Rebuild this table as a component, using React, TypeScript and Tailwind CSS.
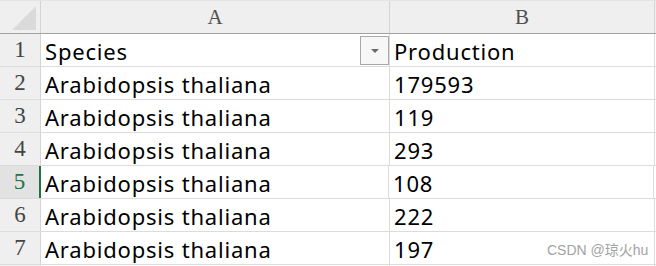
import React from "react"

// Small spreadsheet view: two columns, seven rows, row 5 active
const rows: [string, string][] = [
  ["Species", "Production"],
  ["Arabidopsis thaliana", "179593"],
  ["Arabidopsis thaliana", "119"],
  ["Arabidopsis thaliana", "293"],
  ["Arabidopsis thaliana", "108"],
  ["Arabidopsis thaliana", "222"],
  ["Arabidopsis thaliana", "197"],
]

const ACTIVE_ROW = 5

function FilterButton() {
  return (
    <div className="absolute right-0 top-[2px] w-[29px] h-[29px] border border-[#a8a8a8] bg-[#f7f7f7] flex items-center justify-center">
      <svg width="10" height="6" viewBox="0 0 10 6">
        <path d="M1 1 L9 1 L5 5 Z" fill="#6b6b6b" />
      </svg>
    </div>
  )
}

export default function App() {
  return (
    <div className="relative w-[656px] h-[266px] overflow-hidden bg-white select-none">
      {/* column header strip */}
      <div className="flex h-[34px] bg-[#efefef] border-b border-[#a3a3a3] border-t border-t-[#e4e4e4]">
        <div className="w-[41px] shrink-0 border-r border-[#d4d4d4] relative">
          <svg className="absolute left-[12px] top-[5px]" width="25" height="25" viewBox="0 0 25 25">
            <path d="M0 24 L24 0 L24 24 Z" fill="#dadada" />
          </svg>
        </div>
        <div className="w-[349px] shrink-0 border-r border-[#d4d4d4] flex items-center justify-center pt-[1px] font-['Liberation_Serif',serif] text-[21px] text-[#505050]">
          A
        </div>
        <div className="w-[265px] shrink-0 border-r border-[#d4d4d4] flex items-center justify-center pt-[1px] font-['Liberation_Serif',serif] text-[21px] text-[#505050]">
          B
        </div>
      </div>

      {rows.map(([a, b], i) => {
        const n = i + 1
        const active = n === ACTIVE_ROW
        return (
          <div key={n} className="flex h-[33px] border-b border-[#dcdcdc]">
            <div
              className={
                active
                  ? "w-[41px] shrink-0 border-r-2 border-[#217346] bg-[#e2e2e2] flex items-center justify-center pt-[1px] font-['Liberation_Serif',serif] text-[23px] text-[#217346]"
                  : "w-[41px] shrink-0 border-r border-[#d4d4d4] bg-[#efefef] flex items-center justify-center pt-[1px] font-['Liberation_Serif',serif] text-[23px] text-[#444]"
              }
            >
              {n}
            </div>
            <div
              className={
                active
                  ? "relative w-[348px] shrink-0 border-r border-[#dcdcdc] pl-[4px] pt-[2px] flex items-center font-['Noto_Sans',sans-serif] text-[22px] tracking-[0.8px] text-black"
                  : "relative w-[349px] shrink-0 border-r border-[#dcdcdc] pl-[4px] pt-[2px] flex items-center font-['Noto_Sans',sans-serif] text-[22px] tracking-[0.8px] text-black"
              }
            >
              {a}
              {n === 1 && <FilterButton />}
            </div>
            <div className="w-[265px] shrink-0 border-r border-[#dcdcdc] pl-[4px] pt-[2px] flex items-center font-['Noto_Sans',sans-serif] text-[22px] tracking-[0.8px] text-black">
              {b}
            </div>
          </div>
        )
      })}

      <div className="flex h-[4px]">
        <div className="w-[41px] shrink-0 border-r border-[#d4d4d4] bg-[#efefef]" />
        <div className="w-[349px] shrink-0 border-r border-[#dcdcdc]" />
        <div className="w-[265px] shrink-0 border-r border-[#dcdcdc]" />
      </div>

      <div className="absolute left-[547px] top-[242px] text-[14px] leading-[16px] text-[#a3a3a3] font-['Liberation_Sans','Noto_Sans_CJK_SC',sans-serif]">
        CSDN @琼火hu
      </div>
    </div>
  )
}
